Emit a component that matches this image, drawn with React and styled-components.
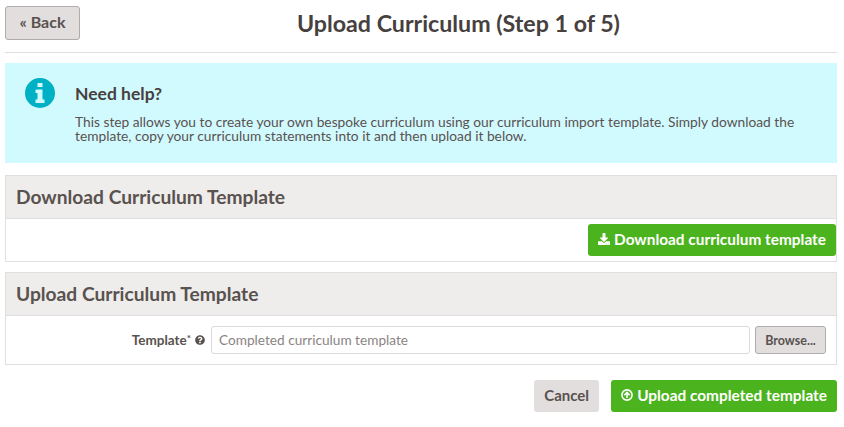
import React from 'react'
import styled, {createGlobalStyle} from 'styled-components'
import {FaDownload, FaQuestionCircle} from 'react-icons/fa'

const GlobalStyle = createGlobalStyle`
    html, body {
        margin: 0;
        padding: 0;
        background: #fff;
    }
    body {
        font-family: "Lato", "Liberation Sans", sans-serif;
        color: #59524f;
    }
`;

// slab serif "i" cut out of a disc, the package one has a thinner stem
const InfoIcon = () => (
    <svg width="30" height="30" viewBox="0 0 30 30">
        <path
            fillRule="evenodd"
            fill="currentColor"
            d="M15 0a15 15 0 1 0 0 30a15 15 0 0 0 0-30zM12.5 5h5v4h-5zM10.5 11.5h7v10h2v3.5h-9v-3.5h2v-6.5h-2z"
        />
    </svg>
);

const UploadIcon = () => (
    <svg width="12" height="12" viewBox="0 0 12 12" fill="none" stroke="currentColor">
        <circle cx="6" cy="6" r="5.1" strokeWidth="1.6"/>
        <path d="M3.3 6.2L6 3.4L8.7 6.2M6 3.8V9" strokeWidth="1.6"/>
    </svg>
);

export default function App () {
    return (
        <Page>
            <GlobalStyle/>
            <Header>
                <BackButton>« Back</BackButton>
                <Title>Upload Curriculum (Step 1 of 5)</Title>
            </Header>

            <Help>
                <HelpIcon><InfoIcon/></HelpIcon>
                <HelpBody>
                    <HelpTitle>Need help?</HelpTitle>
                    <HelpText>
                        This step allows you to create your own bespoke curriculum using our curriculum import template. Simply download the template, copy your curriculum statements into it and then upload it below.
                    </HelpText>
                </HelpBody>
            </Help>

            <Panel>
                <PanelHeading>Download Curriculum Template</PanelHeading>
                <DownloadRow>
                    <GreenButton><FaDownload size={12}/> Download curriculum template</GreenButton>
                </DownloadRow>
            </Panel>

            <Panel>
                <PanelHeading>Upload Curriculum Template</PanelHeading>
                <FormRow>
                    <Label>Template<sup>*</sup> <FaQuestionCircle size={10}/></Label>
                    <Input placeholder="Completed curriculum template" readOnly/>
                    <BrowseButton>Browse...</BrowseButton>
                </FormRow>
            </Panel>

            <Actions>
                <CancelButton>Cancel</CancelButton>
                <GreenButton><UploadIcon/> Upload completed template</GreenButton>
            </Actions>
        </Page>
    )
}

const Page = styled.div`
    box-sizing: border-box;
    width: 844px;
    height: 427px;
    padding: 6px 7px 0 5px;
    overflow: hidden;
`;

const Header = styled.div`
    display: grid;
    grid-template-columns: 75px 1fr;
    align-items: center;
    align-content: start;
    height: 46px;
    border-bottom: 1px solid #e0dede;
`;

const BackButton = styled.button`
    box-sizing: border-box;
    height: 34px;
    padding: 0 0 3px;
    border: 1px solid #b0abab;
    border-radius: 3px;
    background: #e2dede;
    color: #59524f;
    font: 700 16px "Lato", sans-serif;
`;

const Title = styled.h1`
    margin: 0;
    text-align: center;
    font-size: 23.2px;
    line-height: 34px;
    font-weight: 700;
    color: #46403e;
`;

const Help = styled.div`
    display: flex;
    box-sizing: border-box;
    height: 100px;
    margin-top: 10px;
    padding: 15px 20px;
    background: #d1faff;
`;

const HelpIcon = styled.div`
    width: 50px;
    flex: none;
    color: #00b1c6;
`;

const HelpBody = styled.div`
    max-width: 735px;
`;

const HelpTitle = styled.h2`
    margin: 6px 0 11px;
    font-size: 17.5px;
    line-height: 20px;
    font-weight: 700;
    color: #46403e;
`;

const HelpText = styled.p`
    margin: 0;
    font-size: 13.75px;
    line-height: 14px;
    color: #59524f;
`;

const Panel = styled.section`
    margin-top: 12px;
    border: 1px solid #e0dede;
    & + & {
        margin-top: 10px;
    }
`;

const PanelHeading = styled.h3`
    box-sizing: border-box;
    height: 43px;
    margin: 0;
    padding: 0 10px;
    border-bottom: 1px solid #e0dede;
    background: #eeedeb;
    font-size: 19.2px;
    line-height: 42px;
    font-weight: 700;
    color: #59524f;
`;

const DownloadRow = styled.div`
    display: flex;
    justify-content: flex-end;
    box-sizing: border-box;
    height: 42px;
    padding-top: 5px;
`;

const GreenButton = styled.button`
    display: inline-flex;
    align-items: center;
    gap: 4px;
    box-sizing: border-box;
    height: 32px;
    padding: 0 10px 2px;
    border: 0;
    border-radius: 3px;
    background: #4bb31d;
    color: #fff;
    font: 700 15.4px "Lato", sans-serif;
`;

const FormRow = styled.div`
    display: flex;
    align-items: center;
    box-sizing: border-box;
    height: 48px;
    padding: 0 10px 0 0;
`;

const Label = styled.label`
    display: flex;
    align-items: center;
    justify-content: flex-end;
    gap: 4px;
    box-sizing: border-box;
    width: 199px;
    margin-right: 6px;
    font-size: 13.5px;
    font-weight: 700;
    sup {
        font-size: 10px;
        margin: -4px 0 0 -4px;
    }
`;

const Input = styled.input`
    flex: 1;
    box-sizing: border-box;
    height: 28px;
    padding: 0 7px;
    border: 1px solid #dcdada;
    border-radius: 3px;
    font: 13.65px "Lato", sans-serif;
    &::placeholder {
        color: #8a8482;
        opacity: 1;
    }
`;

const BrowseButton = styled.button`
    box-sizing: border-box;
    width: 71px;
    height: 28px;
    margin-left: 5px;
    padding: 0;
    border: 1px solid #b0abab;
    border-radius: 3px;
    background: #e2dede;
    color: #59524f;
    font: 700 12.5px "Lato", sans-serif;
`;

const Actions = styled.div`
    display: flex;
    justify-content: flex-end;
    gap: 12px;
    margin-top: 15px;
`;

const CancelButton = styled.button`
    box-sizing: border-box;
    width: 65px;
    height: 32px;
    padding: 0 0 2px;
    border: 0;
    border-radius: 3px;
    background: #e2dede;
    color: #59524f;
    font: 700 15px "Lato", sans-serif;
`;
